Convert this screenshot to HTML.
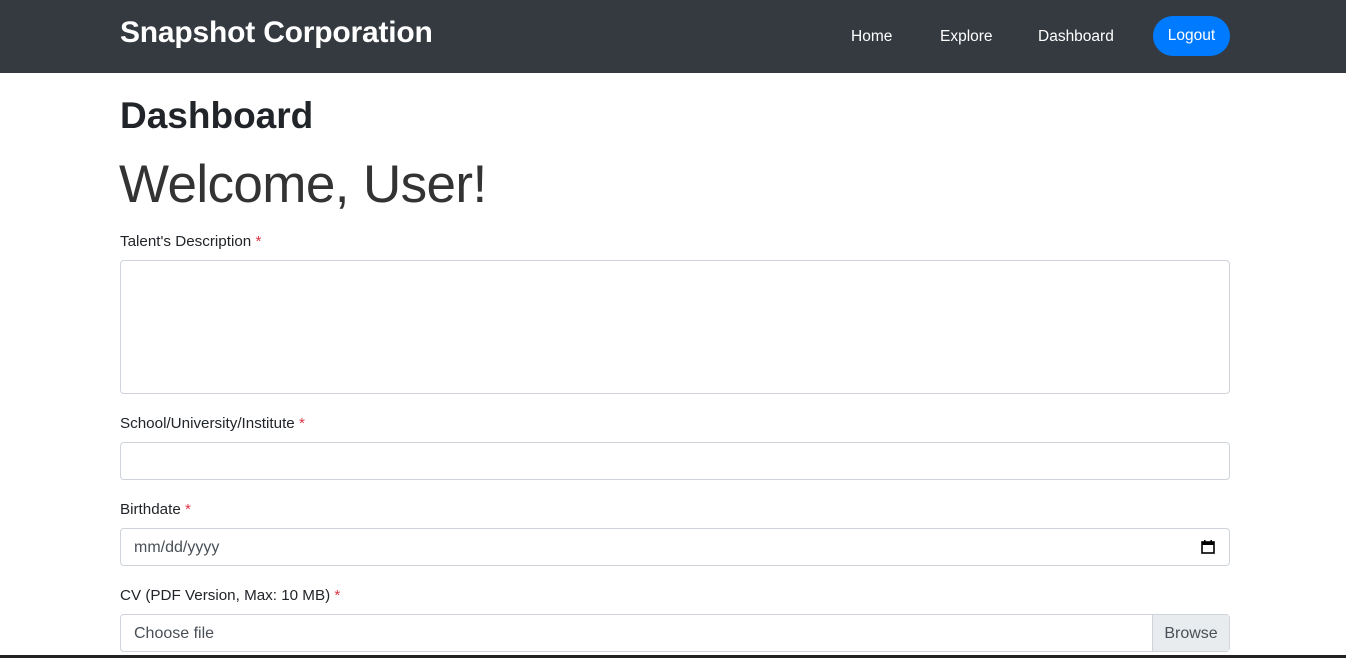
<!DOCTYPE html>
<html><head><style>
*{box-sizing:border-box;margin:0;padding:0}
body{width:1346px;height:658px;overflow:hidden;background:#fff;font-family:"Liberation Sans",sans-serif;color:#212529;position:relative}
.nav{height:73px;background:#343a40;position:relative}
.brand{position:absolute;left:120px;top:16px;color:#fff;font-size:30px;font-weight:bold;letter-spacing:-0.2px}
.nl{position:absolute;top:28px;color:#fff;font-size:15.5px}
.btn{position:absolute;left:1153px;top:16px;width:77px;height:40px;border-radius:20px;background:#007bff;color:#fff;font-size:15.5px;text-align:center;line-height:40px}
h1{position:absolute;left:120px;top:95px;font-size:37px;font-weight:bold}
.w{position:absolute;left:119px;top:154px;font-size:53px;font-weight:300;letter-spacing:-0.6px;color:#333}
.lab{position:absolute;left:120px;font-size:15.2px}
.lab span{color:#dc3545}
.in{position:absolute;left:120px;width:1110px;border:1px solid #ced4da;border-radius:4px;font-size:16px;color:#495057;padding-left:13px}
.bottom{position:absolute;left:0;top:655px;width:1346px;height:3px;background:#222}
</style></head><body>
<div class="nav">
<div class="brand">Snapshot Corporation</div>
<div class="nl" style="left:851px">Home</div>
<div class="nl" style="left:940px">Explore</div>
<div class="nl" style="left:1038px">Dashboard</div>
<div class="btn">Logout</div>
</div>
<h1>Dashboard</h1>
<div class="w">Welcome, User!</div>
<div class="lab" style="top:233px">Talent's Description <span>*</span></div>
<div class="in" style="top:260px;height:134px"></div>
<div class="lab" style="top:415px">School/University/Institute <span>*</span></div>
<div class="in" style="top:442px;height:38px"></div>
<div class="lab" style="top:501px">Birthdate <span>*</span></div>
<div class="in" style="top:528px;height:38px;line-height:38px">mm/dd/yyyy
<svg style="position:absolute;right:14px;top:11px" width="14" height="14" viewBox="0 0 14 14"><rect x="1" y="2" width="12" height="11" fill="none" stroke="#000" stroke-width="1.6"/><rect x="1" y="2" width="12" height="3" fill="#000"/><rect x="3" y="0" width="1.6" height="3" fill="#000"/><rect x="9.4" y="0" width="1.6" height="3" fill="#000"/></svg></div>
<div class="lab" style="top:587px">CV (PDF Version, Max: 10 MB) <span>*</span></div>
<div class="in" style="top:614px;height:38px;line-height:38px">Choose file
<div style="position:absolute;right:0;top:0;width:77px;height:36px;background:#e9ecef;border-left:1px solid #ced4da;text-align:center;line-height:38px;color:#495057">Browse</div></div>
<div class="bottom"></div>
</body></html>
